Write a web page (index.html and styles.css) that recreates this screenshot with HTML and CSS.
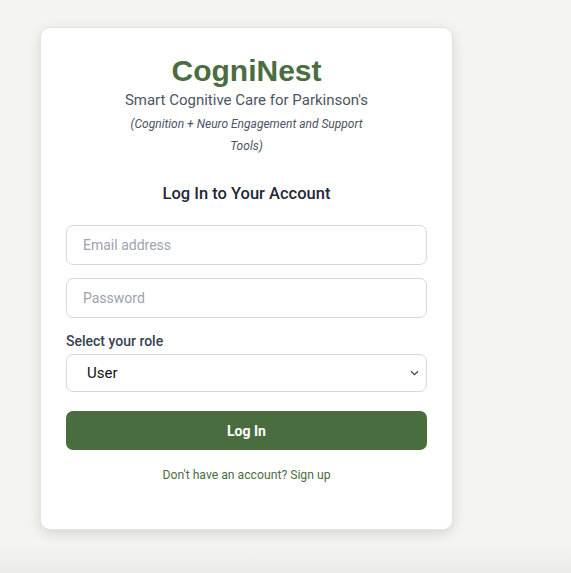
FILE: index.html
```html
<!DOCTYPE html>
<html>
<head>
<meta charset="utf-8">
<link rel="stylesheet" href="styles.css">
</head>
<body>
<div class="page">
  <div class="card">
    <h1 class="brand">CogniNest</h1>
    <p class="tagline">Smart Cognitive Care for Parkinson's</p>
    <p class="sub">(Cognition + Neuro Engagement and Support Tools)</p>
    <h2 class="heading">Log In to Your Account</h2>
    <form class="form">
      <input class="field" type="email" placeholder="Email address">
      <input class="field" type="password" placeholder="Password">
      <label class="label">Select your role</label>
      <div class="select">
        <span>User</span>
        <svg class="chev" width="9" height="6" viewBox="0 0 9 6"><path d="M1 1.2 L4.5 4.6 L8 1.2" fill="none" stroke="#444" stroke-width="1.2"/></svg>
      </div>
      <button class="btn" type="button">Log In</button>
    </form>
    <p class="signup">Don't have an account? Sign up</p>
  </div>
</div>
</body>
</html>
```
FILE: styles.css
```css
html, body {
  margin: 0;
  padding: 0;
}
body {
  background: linear-gradient(to bottom, #f4f5f1 0, #f4f5f1 545px, #ebece7 573px);
  min-height: 573px;
  font-family: Roboto, "Liberation Sans", Arial, sans-serif;
}
.page {
  padding: 27px 0 0 40px;
}
.card {
  box-sizing: border-box;
  width: 413px;
  height: 503px;
  background: #fff;
  border: 1px solid #e2e4df;
  border-radius: 10px;
  box-shadow: 0 4px 14px rgba(0, 0, 0, 0.12);
  padding: 25px 25px 0 25px;
  text-align: center;
}
.brand {
  margin: 0;
  font-family: "Liberation Sans", Arial, sans-serif;
  font-size: 30px;
  line-height: 36px;
  font-weight: 700;
  color: #4a6e3f;
}
.tagline {
  margin: 1px 0 0;
  font-size: 15px;
  line-height: 20px;
  color: #4b5563;
}
.sub {
  margin: 3px auto 0;
  width: 250px;
  font-size: 12px;
  line-height: 22px;
  font-style: italic;
  color: #4b5563;
}
.heading {
  margin: 25px 0 0;
  font-size: 16.5px;
  line-height: 24px;
  font-weight: 500;
  color: #1f2937;
}
.form {
  display: flex;
  flex-direction: column;
  margin-top: 19px;
  text-align: left;
}
.field {
  box-sizing: border-box;
  height: 40px;
  border: 1px solid #d5d8dc;
  border-radius: 7px;
  padding: 0 16px;
  font-family: inherit;
  font-size: 14px;
  color: #111827;
  margin-bottom: 13px;
  outline: none;
}
.field::placeholder {
  color: #9ca3af;
}
.label {
  margin-top: 0;
  font-size: 14px;
  line-height: 20px;
  font-weight: 500;
  color: #374151;
}
.select {
  box-sizing: border-box;
  height: 38px;
  margin-top: 3px;
  border: 1px solid #d5d8dc;
  border-radius: 7px;
  padding: 0 7px 0 20px;
  display: flex;
  align-items: center;
  justify-content: space-between;
  font-size: 15px;
  font-weight: 400;
  color: #111;
}
.btn {
  margin-top: 19px;
  height: 39px;
  border: none;
  border-radius: 7px;
  background: #4a6d40;
  color: #fff;
  font-family: inherit;
  font-size: 14px;
  font-weight: 700;
}
.signup {
  margin: 17px 0 0;
  font-size: 12.2px;
  line-height: 16px;
  color: #4a6e3f;
}
```
